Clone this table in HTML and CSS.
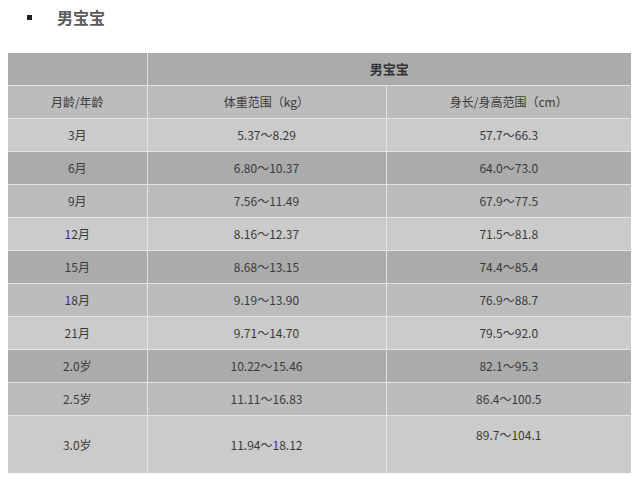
FILE: index.html
```html
<!DOCTYPE html>
<html lang="zh">
<head>
<meta charset="utf-8">
<link rel="stylesheet" href="styles.css">
</head>
<body>
<div class="title"><span class="bullet"></span><span class="title-text">男宝宝</span></div>
<table class="grid">
  <colgroup><col class="c1"><col class="c2"><col class="c3"></colgroup>
  <tr class="r-a"><td></td><td colspan="2" class="bold">男宝宝</td></tr>
  <tr class="r-b"><td>月龄/年龄</td><td>体重范围（kg）</td><td>身长/身高范围（cm）</td></tr>
  <tr class="r-c"><td>3月</td><td>5.37～8.29</td><td>57.7～66.3</td></tr>
  <tr class="r-a"><td>6月</td><td>6.80～10.37</td><td>64.0～73.0</td></tr>
  <tr class="r-b"><td>9月</td><td>7.56～11.49</td><td>67.9～77.5</td></tr>
  <tr class="r-c"><td>12月</td><td>8.16～12.37</td><td>71.5～81.8</td></tr>
  <tr class="r-a"><td>15月</td><td>8.68～13.15</td><td>74.4～85.4</td></tr>
  <tr class="r-b"><td>18月</td><td>9.19～13.90</td><td>76.9～88.7</td></tr>
  <tr class="r-c"><td>21月</td><td>9.71～14.70</td><td>79.5～92.0</td></tr>
  <tr class="r-a"><td>2.0岁</td><td>10.22～15.46</td><td>82.1～95.3</td></tr>
  <tr class="r-b"><td>2.5岁</td><td>11.11～16.83</td><td>86.4～100.5</td></tr>
  <tr class="r-c tall"><td>3.0岁</td><td>11.94～18.12</td><td class="top">89.7～104.1</td></tr>
</table>
</body>
</html>
```
FILE: styles.css
```css
html, body {
  margin: 0;
  padding: 0;
  background: #ffffff;
}
body {
  padding: 0 8px;
  font-family: "Noto Sans CJK SC", "Noto Sans", sans-serif;
  color: #333;
}
.title {
  display: flex;
  align-items: center;
  height: 34px;
  padding-left: 19px;
}
.bullet {
  width: 5px;
  height: 5px;
  background: #222;
  margin-right: 25px;
}
.title-text {
  font-size: 16px;
  font-weight: bold;
  color: #5a5a5a;
}
.grid {
  margin-top: 19px;
  border-collapse: collapse;
  width: 623px;
  table-layout: fixed;
  font-size: 12px;
  color: #3a3a3a;
}
.c1 { width: 139px; }
.c2 { width: 239px; }
.c3 { width: 245px; }
.grid td {
  border: 1px solid #e4e4e4;
  height: 32px;
  padding: 0;
  text-align: center;
  vertical-align: middle;
  line-height: 16px;
}
.grid tr:first-child td { border-top: none; }
.grid td:first-child { border-left: none; }
.grid td:last-child { border-right: none; }
.grid tr:last-child td { border-bottom: none; }
.r-a td { background: #ababab; }
.r-b td { background: #bcbcbc; }
.r-c td { background: #cbcbcb; }
.bold { font-weight: bold; font-size: 13px; color: #333; }
.tall td { height: 57px; }
.grid td.top { vertical-align: top; padding-top: 11px; height: 46px; }
```
